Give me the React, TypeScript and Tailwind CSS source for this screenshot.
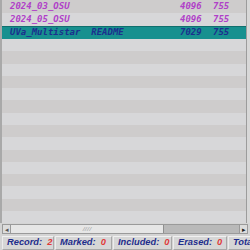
const rows = [
  { name: "2024_03_OSU", size: "4096", mode: "755" },
  { name: "2024_05_OSU", size: "4096", mode: "755" },
  { name: "UVa_Multistar  README", size: "7029", mode: "755", selected: true },
];

const mono = { fontFamily: '"DejaVu Sans Mono", monospace' };

function Row({ i }: { i: number }) {
  const r = rows[i];
  const stripe = i % 2 === 0 ? "bg-[#cecccc]" : "bg-[#d7d7d9]";
  if (r?.selected) {
    return (
      <div className="h-[13px] flex items-center bg-[#17908f] border-t border-[#0f6f6e] text-[#1b2f8e] text-[9px] font-bold italic whitespace-pre" style={mono}>
        <span className="pl-2 w-[178px]">{r.name}</span>
        <span className="w-[33px]">{r.size}</span>
        <span>{r.mode}</span>
      </div>
    );
  }
  return (
    <div className={`h-[13px] flex items-center ${stripe} text-[#b040c8] text-[9px] font-bold italic whitespace-pre`} style={mono}>
      {r && (
        <>
          <span className="pl-2 w-[178px]">{r.name}</span>
          <span className="w-[33px]">{r.size}</span>
          <span>{r.mode}</span>
        </>
      )}
    </div>
  );
}

function Stat({ label, value, w }: { label: string; value: string; w: string }) {
  return (
    <div className={`${w} shrink-0 h-full flex items-center gap-[5px] pl-[4px] border border-[#a8a8a8] border-t-[#f0f0f0] border-l-[#ececec] bg-[#d6d6d6] overflow-hidden`}>
      <span className="text-[#1f2d8c]">{label}</span>
      <span className="text-[#e03a3a]">{value}</span>
    </div>
  );
}

export default function App() {
  return (
    <div className="w-[250px] h-[250px] overflow-hidden bg-[#d4d4d4] flex flex-col">
      <div className="h-[225px] flex border-l-2 border-[#a9a9a9] overflow-hidden">
        <div className="flex-1 flex flex-col">
          {Array.from({ length: 18 }).map((_, i) => (
            <Row key={i} i={i} />
          ))}
        </div>
        <div className="w-[4px] border-l border-[#9c9c9c] bg-[#d8d8d8]" />
      </div>
      <div className="h-[10px] mt-[1px] mx-[2px] flex items-center border border-[#9a9a9a] bg-[#b9b9b9]">
        <div className="w-[8px] h-full flex items-center justify-center bg-[#dcdcdc] border-r border-[#9a9a9a] text-[#555] text-[7px] leading-none">◂</div>
        <div className="w-[153px] h-full flex items-center justify-center bg-[#e6e6e6] border-r border-[#8f8f8f] text-[#999] text-[6px] italic leading-none">////</div>
        <div className="flex-1" />
        <div className="w-[8px] h-full flex items-center justify-center bg-[#dcdcdc] border-l border-[#9a9a9a] text-[#222] text-[7px] leading-none">▸</div>
      </div>
      <div className="h-[14px] mt-[2px] flex gap-[1px] pl-[2px] text-[9.3px] font-bold italic whitespace-nowrap leading-none" style={{ fontFamily: '"Liberation Sans", Arial, sans-serif' }}>
        <Stat label="Record:" value="2" w="w-[52px]" />
        <Stat label="Marked:" value="0" w="w-[57px]" />
        <Stat label="Included:" value="0" w="w-[59px]" />
        <Stat label="Erased:" value="0" w="w-[54px]" />
        <Stat label="Total:" value="3" w="w-[40px]" />
      </div>
    </div>
  );
}
